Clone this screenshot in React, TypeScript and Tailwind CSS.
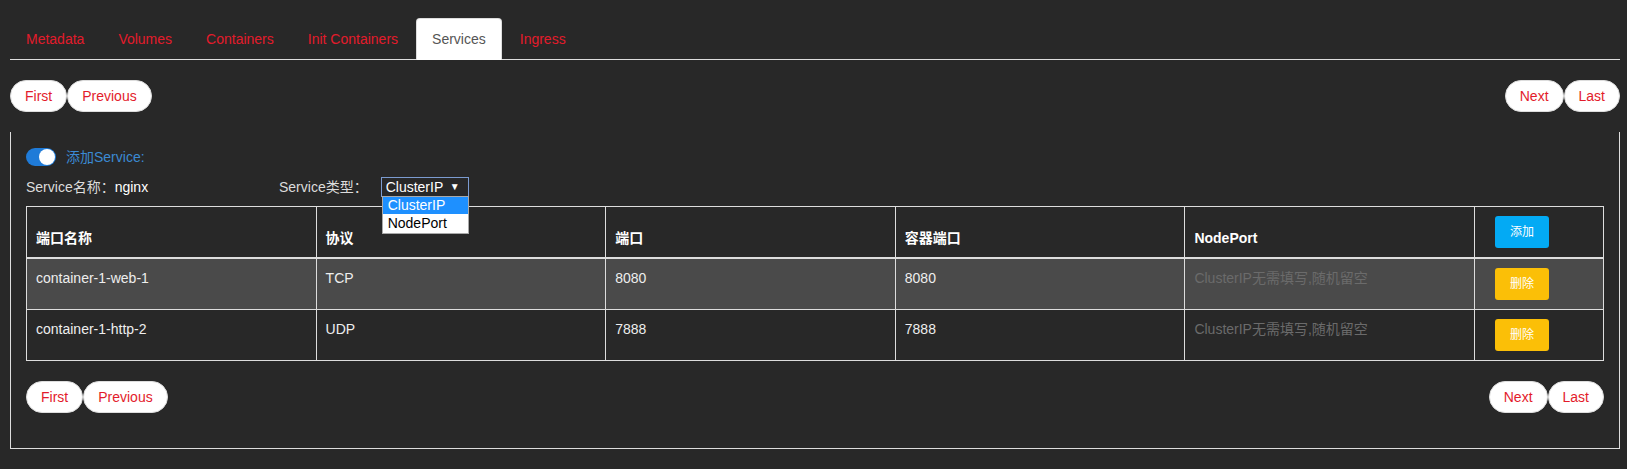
import { useState } from 'react';

const tabs = ['Metadata', 'Volumes', 'Containers', 'Init Containers', 'Services', 'Ingress'];

const rows = [
  { name: 'container-1-web-1', protocol: 'TCP', port: '8080', targetPort: '8080' },
  { name: 'container-1-http-2', protocol: 'UDP', port: '7888', targetPort: '7888' },
];

function Pager() {
  const btn =
    'h-[32px] px-[14px] rounded-[16px] bg-white border border-[#ddd] text-[#e31b2b] leading-[20px]';
  return (
    <div className="flex justify-between">
      <div className="flex">
        <button className={btn}>First</button>
        <button className={btn}>Previous</button>
      </div>
      <div className="flex">
        <button className={btn}>Next</button>
        <button className={btn}>Last</button>
      </div>
    </div>
  );
}

export default function App() {
  const [active, setActive] = useState('Services');
  const [hovered] = useState(0);

  return (
    <div className="min-h-screen bg-[#282828] pl-[10px] pr-[7px] pt-[18px] font-['Liberation_Sans','Noto_Sans_CJK_SC',sans-serif] text-[14px] leading-[20px]">
      {/* Tabs */}
      <ul className="flex border-b border-[#ddd]">
        {tabs.map((t) => (
          <li key={t} className="-mb-px mr-[2px]">
            <a
              onClick={() => setActive(t)}
              className={
                t === active
                  ? 'block px-[15px] py-[10px] border border-[#ddd] border-b-transparent rounded-t-[4px] bg-white text-[#555] cursor-default'
                  : 'block px-[15px] py-[10px] border border-transparent rounded-t-[4px] text-[#e31b2b] cursor-pointer'
              }
            >
              {t}
            </a>
          </li>
        ))}
      </ul>

      <div className="mt-[20px]">
        <Pager />
      </div>

      {/* Services panel */}
      <div className="mt-[20px] border-x border-b border-[#ddd] px-[15px] pt-[15px] pb-[35px]">
        <div className="flex items-center h-[20px]">
          <div className="w-[30px] h-[18px] rounded-full bg-[#1f7bd8] flex items-center justify-end pr-[1px]">
            <div className="w-[16px] h-[16px] rounded-full bg-white" />
          </div>
          <span className="ml-[10px] text-[#3b8ad3]">添加Service:</span>
        </div>

        <div className="mt-[10px] flex items-center h-[20px]">
          <div className="w-[253px] flex">
            <span className="text-[#dcdcdc]">Service名称：</span>
            <span className="text-white">nginx</span>
          </div>
          <span className="text-[#dcdcdc]">Service类型：</span>
          <div className="relative ml-[13px]">
            <div className="w-[88px] h-[20px] border border-[#7b9bd0] bg-[#282828] text-white flex items-center justify-between pl-[4px] pr-[8px] leading-[18px]">
              <span>ClusterIP</span>
              <span className="text-[10px]">▼</span>
            </div>
            <div className="absolute left-[1px] top-[19px] w-[87px] bg-white border border-[#a9a9a9] z-10">
              <div className="h-[17px] leading-[17px] bg-[#1e90ff] text-white pl-[5px]">ClusterIP</div>
              <div className="h-[19px] leading-[19px] text-black pl-[5px]">NodePort</div>
            </div>
          </div>
        </div>

        <table className="mt-[9px] w-full table-fixed border-collapse border border-[#ddd]">
          <colgroup>
            <col />
            <col />
            <col />
            <col />
            <col />
            <col className="w-[129px]" />
          </colgroup>
          <thead>
            <tr>
              {['端口名称', '协议', '端口', '容器端口', 'NodePort'].map((h) => (
                <th
                  key={h}
                  className="border border-[#ddd] border-b-2 px-[9px] py-[9px] text-left align-bottom font-bold text-white"
                >
                  {h}
                </th>
              ))}
              <th className="border border-[#ddd] border-b-2 px-[9px] py-[9px] text-left align-bottom font-normal">
                <button className="ml-[11px] w-[54px] h-[32px] rounded-[3px] bg-[#03aaf4] text-white text-[12px]">
                  添加
                </button>
              </th>
            </tr>
          </thead>
          <tbody>
            {rows.map((r, i) => (
              <tr key={r.name} className={i === hovered ? 'bg-[#4a4a4a]' : ''}>
                <td className="border border-[#ddd] px-[9px] py-[9px] align-top text-[#eee]">{r.name}</td>
                <td className="border border-[#ddd] px-[9px] py-[9px] align-top text-[#eee]">{r.protocol}</td>
                <td className="border border-[#ddd] px-[9px] py-[9px] align-top text-[#eee]">{r.port}</td>
                <td className="border border-[#ddd] px-[9px] py-[9px] align-top text-[#eee]">{r.targetPort}</td>
                <td className="border border-[#ddd] px-[9px] py-[9px] align-top text-[#6b6b6b]">
                  ClusterIP无需填写,随机留空
                </td>
                <td className="border border-[#ddd] px-[9px] py-[9px] align-top">
                  <button className="ml-[11px] w-[54px] h-[32px] rounded-[3px] bg-[#fbbf07] text-white text-[12px]">
                    删除
                  </button>
                </td>
              </tr>
            ))}
          </tbody>
        </table>

        <div className="mt-[20px]">
          <Pager />
        </div>
      </div>
    </div>
  );
}
